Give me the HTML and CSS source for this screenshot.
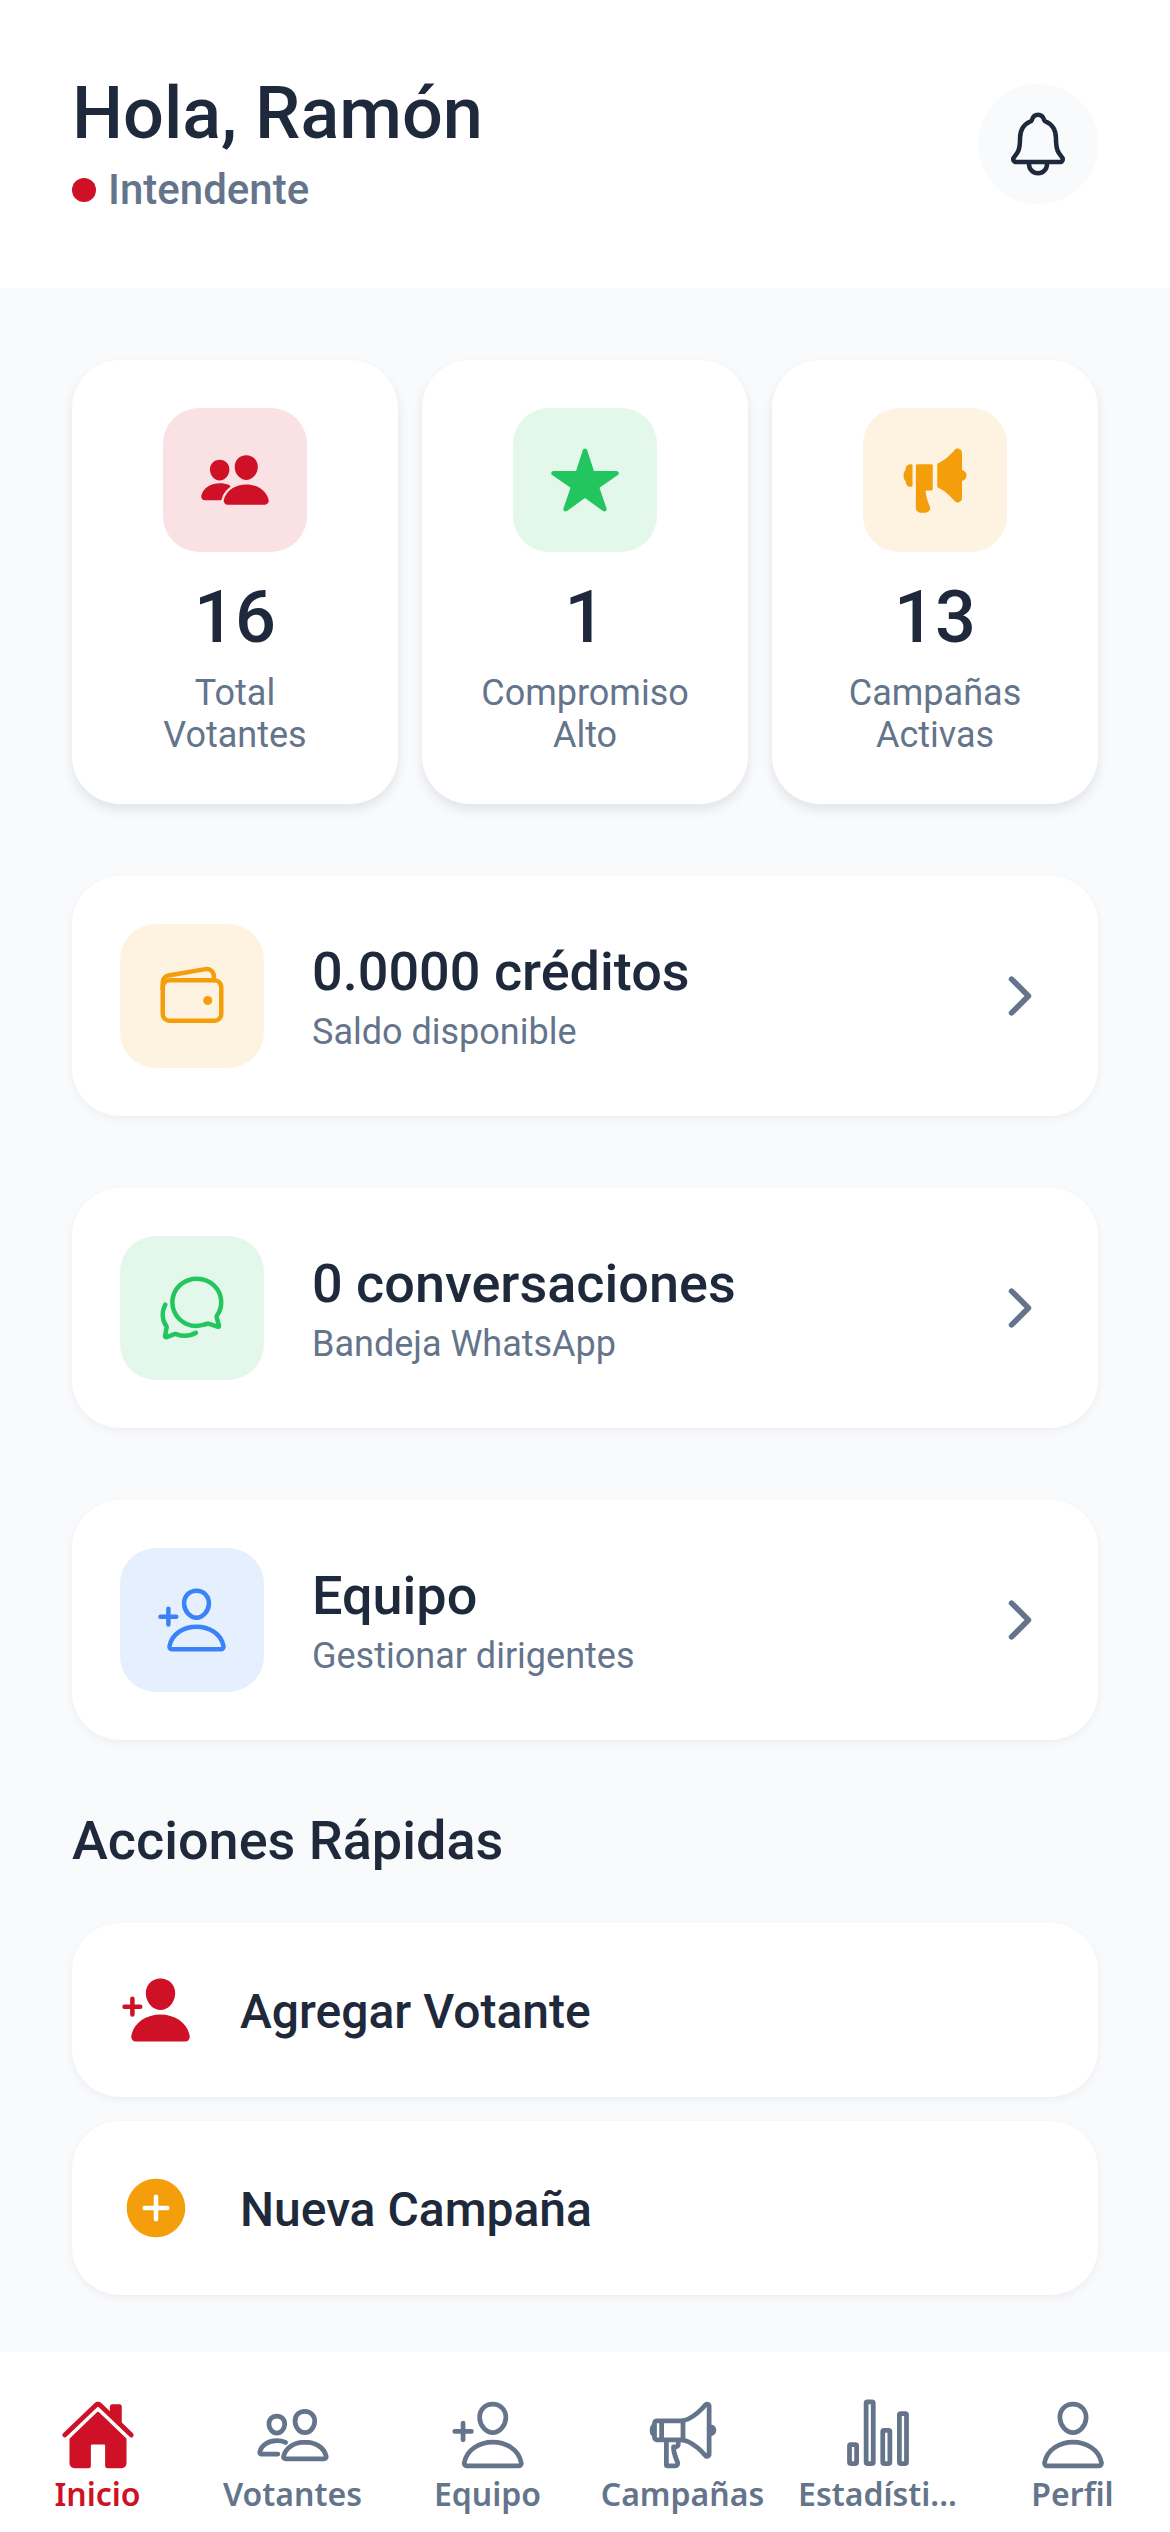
FILE: index.html
```html
<!DOCTYPE html>
<html lang="es">
<head>
  <meta charset="UTF-8">
  <title>Inicio</title>
  <meta name="viewport" content="width=device-width,initial-scale=1">
  <link rel="stylesheet" href="styles.css">
</head>
<body>
<div class="app">
  <header class="top">
    <div>
      <h1>Hola, Ramón</h1>
      <div class="role"><span class="dot"></span>Intendente</div>
    </div>
    <div class="bell">
      <svg class="ic line" viewBox="0 0 512 512"><path d="M427.68 351.43C402 320 383.87 304 383.87 217.35 383.87 138 343.35 109.73 310 96c-4.43-1.82-8.6-6-9.95-10.55C294.2 65.54 277.8 48 256 48s-38.21 17.55-44 37.47c-1.35 4.6-5.52 8.71-9.95 10.53-33.39 13.75-73.87 41.92-73.87 121.35C128.13 304 110 320 84.32 351.43 73.68 364.45 83 384 101.61 384h308.88c18.51 0 27.77-19.61 17.19-32.57zM320 384v16a64 64 0 01-128 0v-16"/></svg>
    </div>
  </header>

  <main>
    <section class="stats">
      <div class="stat">
        <div class="tile red">
          <svg class="ic fill" viewBox="0 0 512 512"><path d="M336 256c-20.56 0-40.44-9.18-56-25.84-15.13-16.25-24.37-37.92-26-61-1.74-24.62 5.77-47.26 21.14-63.76S312 80 336 80c23.83 0 45.38 9.06 60.7 25.52 15.47 16.62 23 39.22 21.26 63.63-1.67 23.11-10.9 44.77-26 61C376.44 246.82 356.57 256 336 256zM467.83 432H204.18a27.71 27.71 0 01-22-10.67 30.22 30.22 0 01-5.26-25.79c8.42-33.81 29.28-61.85 60.32-81.08C264.79 297.4 299.86 288 336 288c36.85 0 71 9 98.71 26.05 31.11 19.13 52 47.33 60.38 81.55a30.27 30.27 0 01-5.32 25.78A27.68 27.68 0 01467.83 432zM147 260c-35.19 0-66.13-32.72-69-72.93-1.42-20.6 5-39.65 18-53.62 12.86-13.83 31-21.45 51-21.45s38 7.66 50.93 21.57c13.1 14.08 19.5 33.09 18 53.52-2.87 40.2-33.8 72.91-68.93 72.91zM212.66 291.45c-17.59-8.6-40.42-12.9-65.65-12.9-29.46 0-58.07 7.68-80.57 21.62-25.51 15.83-42.67 38.88-49.6 66.71a27.39 27.39 0 005.36 23.73A25.32 25.32 0 0042.18 400h111a8 8 0 007.87-6.57c.11-.63.25-1.26.41-1.88 8.48-34.06 28.35-62.84 57.71-83.82a8 8 0 00-.63-13.39c-1.57-.92-3.37-1.89-5.84-2.89z"/></svg>
        </div>
        <div class="num">16</div>
        <div class="lbl">Total<br>Votantes</div>
      </div>
      <div class="stat">
        <div class="tile green">
          <svg class="ic fill" viewBox="0 0 512 512"><path d="M394 480a16 16 0 01-9.39-3L256 383.76 127.39 477a16 16 0 01-24.55-18.08L153 310.35 23 221.2a16 16 0 019-29.2h160.38l48.4-148.95a16 16 0 0130.44 0l48.4 149H480a16 16 0 019.05 29.2L359 310.35l50.13 148.53A16 16 0 01394 480z"/></svg>
        </div>
        <div class="num">1</div>
        <div class="lbl">Compromiso<br>Alto</div>
      </div>
      <div class="stat">
        <div class="tile orange">
          <svg class="ic fill" viewBox="0 0 512 512"><path d="M48 176v.66a17.38 17.38 0 01-4.2 11.23v.05C38.4 194.32 32 205.74 32 224c0 16.55 5.3 28.23 11.68 35.91A19 19 0 0148 272a32 32 0 0032 32h8a8 8 0 008-8V152a8 8 0 00-8-8h-8a32 32 0 00-32 32zM452.18 186.55l-.93-.17a4 4 0 01-3.25-3.93V62c0-12.64-8.39-24-20.89-28.32-11.92-4.11-24.34-.76-31.68 8.53a431.18 431.18 0 01-51.31 51.69c-23.63 20-46.24 34.25-67 42.31a8 8 0 00-5.15 7.47V299a16 16 0 009.69 14.69c19.34 8.29 40.24 21.83 62 40.28a433.74 433.74 0 0151.68 52.16A26.22 26.22 0 00416.44 416a33.07 33.07 0 0010.44-1.74C439.71 410 448 399.05 448 386.4V265.53a4 4 0 013.33-3.94l.85-.14C461.8 258.84 480 247.67 480 224s-18.2-34.84-27.82-37.45zM240 320V152a8 8 0 00-8-8H128a8 8 0 00-8 8v304a32 32 0 0032 32h37.7a31.9 31.9 0 0030.7-41.2c-.08-.26-.18-.52-.27-.78-7.61-22.17-30.13-67.02-30.13-116.02H232a8 8 0 008-8z"/></svg>
        </div>
        <div class="num">13</div>
        <div class="lbl">Campañas<br>Activas</div>
      </div>
    </section>

    <a class="row">
      <div class="tile orange">
        <svg class="ic line" viewBox="0 0 512 512"><rect x="48" y="144" width="416" height="288" rx="48" ry="48"/><path d="M411.36 144v-30A50 50 0 00352 64.9L88.64 109.85A50 50 0 0048 159v49"/><path class="solid" d="M368 320a32 32 0 1132-32 32 32 0 01-32 32z"/></svg>
      </div>
      <div class="row-text">
        <div class="row-title">0.0000 créditos</div>
        <div class="row-sub">Saldo disponible</div>
      </div>
      <svg class="chev" viewBox="0 0 512 512"><path d="M184 112l144 144-144 144"/></svg>
    </a>

    <a class="row">
      <div class="tile green">
        <svg class="ic line" viewBox="0 0 512 512"><path d="M431 320.6c-1-3.6 1.2-8.6 3.3-12.2a33.68 33.68 0 012.1-3.1A162 162 0 00464 215c.3-92.2-77.5-167-173.7-167-83.9 0-153.9 57.1-170.3 132.9a160.7 160.7 0 00-3.7 34.2c0 92.3 74.8 169.1 171 169.1 15.3 0 35.9-4.6 47.2-7.7s22.5-7.2 25.4-8.3a26.44 26.44 0 019.3-1.7 26 26 0 0110.1 2l56.7 20.1a13.52 13.52 0 003.9 1 8 8 0 008-8 12.85 12.85 0 00-.5-2.7z"/><path d="M66.46 232a146.23 146.23 0 006.39 152.67c2.31 3.49 3.61 6.19 3.21 8s-11.93 61.87-11.93 61.87a8 8 0 002.71 7.68A8.17 8.17 0 0072 464a7.26 7.26 0 002.91-.6l56.21-22a15.7 15.7 0 0112 .2c18.94 7.38 39.88 12 60.83 12A159.21 159.21 0 00284 432.11"/></svg>
      </div>
      <div class="row-text">
        <div class="row-title">0 conversaciones</div>
        <div class="row-sub">Bandeja WhatsApp</div>
      </div>
      <svg class="chev" viewBox="0 0 512 512"><path d="M184 112l144 144-144 144"/></svg>
    </a>

    <a class="row">
      <div class="tile blue">
        <svg class="ic line" viewBox="0 0 512 512"><path d="M376 144c-3.92 52.87-44 96-88 96s-84.15-43.12-88-96c-4-55 35-96 88-96s92 42 88 96z"/><path d="M288 304c-87 0-175.3 48-191.64 138.6-2 10.92 4.21 21.4 15.65 21.4H464c11.44 0 17.62-10.48 15.65-21.4C463.3 352 375 304 288 304z"/><path d="M88 176v112M144 232H32"/></svg>
      </div>
      <div class="row-text">
        <div class="row-title">Equipo</div>
        <div class="row-sub">Gestionar dirigentes</div>
      </div>
      <svg class="chev" viewBox="0 0 512 512"><path d="M184 112l144 144-144 144"/></svg>
    </a>

    <h2>Acciones Rápidas</h2>

    <a class="action">
      <svg class="ic fill red-ic" viewBox="0 0 512 512"><path d="M288 256c52.79 0 99.43-49.71 104-110.82 2.27-30.7-7.36-59.33-27.12-80.6C345.33 43.57 318 32 288 32c-30.24 0-57.59 11.5-77 32.38-19.63 21.11-29.2 49.8-27 80.78C188.49 206.28 235.12 256 288 256zM495.38 439.76c-8.44-46.82-34.79-86.15-76.19-113.75C382.42 301.5 335.83 288 288 288s-94.42 13.5-131.19 38c-41.4 27.6-67.75 66.93-76.19 113.75-1.93 10.73.69 21.34 7.19 29.11A30.94 30.94 0 00112 480h352a30.94 30.94 0 0024.21-11.13c6.48-7.77 9.1-18.38 7.17-29.11zM104 288v-40h40a16 16 0 000-32h-40v-40a16 16 0 00-32 0v40H32a16 16 0 000 32h40v40a16 16 0 0032 0z"/></svg>
      <span>Agregar Votante</span>
    </a>
    <a class="action">
      <svg class="ic fill orange-ic" viewBox="0 0 512 512"><path d="M256 48C141.31 48 48 141.31 48 256s93.31 208 208 208 208-93.31 208-208S370.69 48 256 48zm80 224h-64v64a16 16 0 01-32 0v-64h-64a16 16 0 010-32h64v-64a16 16 0 0132 0v64h64a16 16 0 010 32z"/></svg>
      <span>Nueva Campaña</span>
    </a>
  </main>

  <nav class="tabs">
    <a class="tab active">
      <svg class="tab-ic fill" viewBox="0 0 512 512"><path d="M261.56 101.28a8 8 0 00-11.06 0L66.4 277.15a8 8 0 00-2.47 5.79L63.9 448a32 32 0 0032 32H192a16 16 0 0016-16V328a8 8 0 018-8h80a8 8 0 018 8v136a16 16 0 0016 16h96.06a32 32 0 0032-32V282.94a8 8 0 00-2.47-5.79z"/><path d="M490.91 244.15l-74.8-71.56V64a16 16 0 00-16-16h-48a16 16 0 00-16 16v32l-57.92-55.38C272.77 35.14 264.71 32 256 32c-8.68 0-16.72 3.14-22.14 8.63l-212.7 203.5c-6.22 6-7 15.87-1.34 22.37A16 16 0 0043 267.56L250.5 69.28a8 8 0 0111.06 0l207.52 198.28a16 16 0 0022.59-.44c6.14-6.36 5.63-16.86-.76-22.97z"/></svg>
      <span>Inicio</span>
    </a>
    <a class="tab">
      <svg class="tab-ic line" viewBox="0 0 512 512"><path d="M402 168c-2.93 40.67-33.1 72-66 72s-63.12-31.32-66-72c-3-42.31 26.37-72 66-72s69 30.46 66 72z"/><path d="M336 304c-65.17 0-127.84 32.37-143.54 95.41-2.08 8.34 3.15 16.59 11.72 16.59h263.65c8.57 0 13.77-8.25 11.72-16.59C463.85 335.36 401.18 304 336 304z"/><path d="M200 185.94c-2.34 32.48-26.72 58.06-53 58.06s-50.7-25.57-53-58.06C91.61 152.15 115.34 128 147 128s55.39 24.77 53 57.94z"/><path d="M206 306c-18.05-8.27-37.93-11.45-59-11.45-52 0-102.1 25.85-114.65 76.2-1.65 6.66 2.53 13.25 9.37 13.25H154"/></svg>
      <span>Votantes</span>
    </a>
    <a class="tab">
      <svg class="tab-ic line" viewBox="0 0 512 512"><path d="M376 144c-3.92 52.87-44 96-88 96s-84.15-43.12-88-96c-4-55 35-96 88-96s92 42 88 96z"/><path d="M288 304c-87 0-175.3 48-191.64 138.6-2 10.92 4.21 21.4 15.65 21.4H464c11.44 0 17.62-10.48 15.65-21.4C463.3 352 375 304 288 304z"/><path d="M88 176v112M144 232H32"/></svg>
      <span>Equipo</span>
    </a>
    <a class="tab">
      <svg class="tab-ic line" viewBox="0 0 512 512"><path d="M407.94 52.22S321.3 160 240 160H80a16 16 0 00-16 16v96a16 16 0 0016 16h160c81.3 0 167.94 108.23 167.94 108.23 6.06 8 24.06 2.52 24.06-9.83V62c0-12.31-17-18.82-24.06-9.78zM64 256s-16-6-16-32 16-32 16-32M448 246s16-4.33 16-22-16-22-16-22M256 160v128M112 160v128M144 288v168a8 8 0 008 8h53a16 16 0 0015.29-20.73C211.91 416.39 192 386.08 192 336h16a16 16 0 0016-16v-16a16 16 0 00-16-16h-16"/></svg>
      <span>Campañas</span>
    </a>
    <a class="tab">
      <svg class="tab-ic line" viewBox="0 0 512 512"><rect x="64" y="320" width="48" height="128" rx="8" ry="8"/><rect x="288" y="224" width="48" height="224" rx="8" ry="8"/><rect x="400" y="112" width="48" height="336" rx="8" ry="8"/><rect x="176" y="32" width="48" height="416" rx="8" ry="8"/></svg>
      <span>Estadísti...</span>
    </a>
    <a class="tab">
      <svg class="tab-ic line" viewBox="0 0 512 512"><path d="M344 144c-3.92 52.87-44 96-88 96s-84.15-43.12-88-96c-4-55 35-96 88-96s92 42 88 96z"/><path d="M256 304c-87 0-175.3 48-191.64 138.6C62.39 453.52 68.57 464 80 464h352c11.44 0 17.62-10.48 15.65-21.4C431.3 352 343 304 256 304z"/></svg>
      <span>Perfil</span>
    </a>
  </nav>
</div>
</body>
</html>
```

FILE: styles.css
```css
:root {
  --ink: #1e293b;
  --muted: #64748b;
  --bg: #f8fafc;
  --red: #ce1126;
  --orange: #f59e0b;
  --green: #22c55e;
  --blue: #3b82f6;
}
html, body {
  margin: 0;
  padding: 0;
  background: var(--bg);
  color: var(--ink);
  font-family: Roboto, "Liberation Sans", sans-serif;
}
.app {
  width: 1170px;
  height: 2532px;
  display: flex;
  flex-direction: column;
  overflow: hidden;
}

/* icons */
.ic { width: 72px; height: 72px; flex: none; display: block; }
.fill { fill: currentColor; }
.line {
  fill: none;
  stroke: currentColor;
  stroke-width: 32;
  stroke-linecap: round;
  stroke-linejoin: round;
}
.line .solid { fill: currentColor; stroke: none; }
.chev {
  width: 60px;
  height: 60px;
  flex: none;
  fill: none;
  stroke: var(--muted);
  stroke-width: 48;
  stroke-linecap: round;
  stroke-linejoin: round;
}
.red-ic { color: var(--red); }
.orange-ic { color: var(--orange); }

/* header */
.top {
  background: #fff;
  height: 288px;
  box-sizing: border-box;
  padding: 72px 72px 0;
  display: flex;
  justify-content: space-between;
  flex: none;
}
h1 {
  margin: 0;
  font-size: 72px;
  line-height: 84px;
  font-weight: 500;
}
.role {
  margin-top: 10px;
  display: flex;
  align-items: center;
  gap: 12px;
  font-size: 42px;
  line-height: 48px;
  font-weight: 500;
  color: var(--muted);
}
.dot {
  width: 24px;
  height: 24px;
  border-radius: 50%;
  background: var(--red);
}
.bell {
  width: 120px;
  height: 120px;
  margin-top: 12px;
  border-radius: 50%;
  background: var(--bg);
  display: flex;
  align-items: center;
  justify-content: center;
}

/* content */
main {
  flex: 1;
  min-height: 0;
  overflow: hidden;
  padding: 72px 72px 0;
}
.stats {
  display: grid;
  grid-template-columns: repeat(3, 1fr);
  gap: 24px;
  margin-bottom: 72px;
}
.stat {
  background: #fff;
  border-radius: 48px;
  padding: 48px 0;
  display: flex;
  flex-direction: column;
  align-items: center;
  box-shadow: 0 6px 12px rgba(15, 23, 42, 0.09);
}
.tile {
  width: 144px;
  height: 144px;
  border-radius: 36px;
  flex: none;
  display: flex;
  align-items: center;
  justify-content: center;
}
.tile.red { background: #ce112620; color: var(--red); }
.tile.green { background: #22c55e20; color: var(--green); }
.tile.orange { background: #f59e0b20; color: var(--orange); }
.tile.blue { background: #3b82f620; color: var(--blue); }
.num {
  margin-top: 24px;
  font-size: 72px;
  line-height: 84px;
  font-weight: 500;
}
.lbl {
  margin-top: 12px;
  font-size: 36px;
  line-height: 42px;
  color: var(--muted);
  text-align: center;
}
.row {
  background: #fff;
  border-radius: 48px;
  height: 240px;
  box-sizing: border-box;
  padding: 0 48px;
  margin-bottom: 72px;
  display: flex;
  align-items: center;
  gap: 48px;
  box-shadow: 0 3px 9px rgba(15, 23, 42, 0.05);
}
.row-text { flex: 1; }
.row-title {
  font-size: 54px;
  line-height: 63px;
  font-weight: 500;
}
.row-sub {
  margin-top: 8px;
  font-size: 36px;
  line-height: 42px;
  color: var(--muted);
}
h2 {
  margin: -3px 0 51px;
  font-size: 54px;
  line-height: 63px;
  font-weight: 500;
}
.action {
  background: #fff;
  border-radius: 48px;
  height: 174px;
  box-sizing: border-box;
  padding: 0 48px;
  margin-bottom: 24px;
  display: flex;
  align-items: center;
  gap: 48px;
  font-size: 48px;
  font-weight: 500;
  box-shadow: 0 3px 9px rgba(15, 23, 42, 0.05);
}
.action span { padding-top: 3px; }

/* bottom tabs */
.tabs {
  flex: none;
  height: 180px;
  box-sizing: border-box;
  padding-top: 45px;
  background: #fff;
  display: grid;
  grid-template-columns: repeat(6, 1fr);
}
.tab {
  display: flex;
  flex-direction: column;
  align-items: center;
  color: var(--muted);
  font-family: "Noto Sans", Roboto, sans-serif;
  font-size: 32px;
  line-height: 42px;
  font-weight: 600;
}
.tab.active { color: var(--red); }
.tab-ic { width: 76px; height: 76px; display: block; }
```
